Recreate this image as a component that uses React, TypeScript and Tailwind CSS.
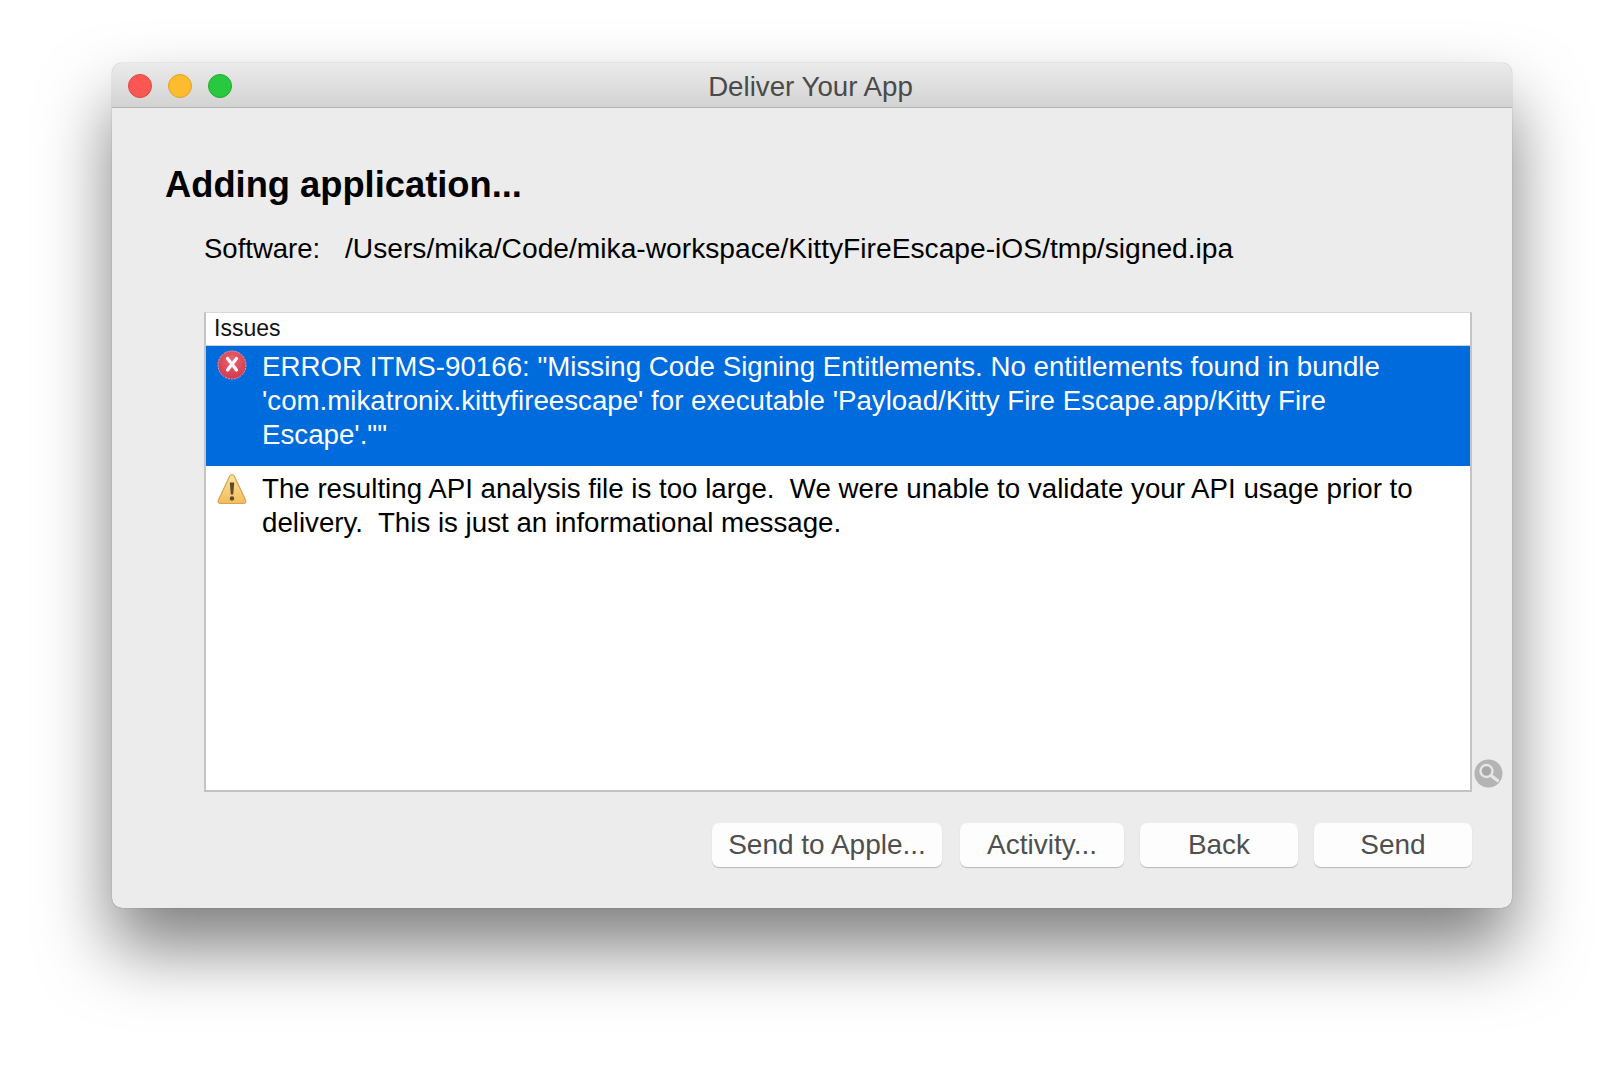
const font = { fontFamily: '"Liberation Sans", Arial, sans-serif' }

function ErrorIcon() {
  return (
    <svg width="30" height="30" viewBox="0 0 30 30" className="shrink-0">
      <defs>
        <radialGradient id="err" cx="50%" cy="35%" r="65%">
          <stop offset="0%" stopColor="#ee6470" />
          <stop offset="100%" stopColor="#cf3a4c" />
        </radialGradient>
      </defs>
      <circle cx="15" cy="15" r="14" fill="url(#err)" stroke="#e8a0ad" strokeWidth="1" strokeDasharray="2 1" />
      <path d="M10.5 8.5 L19.5 20 M19.5 8.5 L10.5 20" stroke="#fff" strokeWidth="3.2" strokeLinecap="round" />
    </svg>
  )
}

function WarningIcon() {
  return (
    <svg width="30" height="32" viewBox="0 0 30 32" className="shrink-0">
      <defs>
        <linearGradient id="warn" x1="0" y1="0" x2="0" y2="1">
          <stop offset="0%" stopColor="#fbe3a4" />
          <stop offset="100%" stopColor="#f3bc5c" />
        </linearGradient>
      </defs>
      <path d="M15 1.5 C16 1.5 16.8 2.2 17.4 3.3 L28.5 27 C29.5 29 28.5 30.5 26.5 30.5 L3.5 30.5 C1.5 30.5 .5 29 1.5 27 L12.6 3.3 C13.2 2.2 14 1.5 15 1.5 Z" fill="url(#warn)" stroke="#d9a24e" strokeWidth="1.2" />
      <path d="M12.8 9.5 H17.2 L16.2 21.5 H13.8 Z" fill="#5c4a28" />
      <circle cx="15" cy="25.4" r="2.2" fill="#5c4a28" />
    </svg>
  )
}

function SearchIcon() {
  return (
    <svg width="29" height="29" viewBox="0 0 29 29" className="shrink-0">
      <circle cx="14.5" cy="14.5" r="14" fill="#b4b4b4" />
      <circle cx="12.5" cy="12" r="6" fill="#a8a8a8" stroke="#e6e6e6" strokeWidth="2.4" />
      <path d="M17 16.5 L23.5 21.5" stroke="#e6e6e6" strokeWidth="3.4" strokeLinecap="round" />
    </svg>
  )
}

function MacButton({ label, width }: { label: string; width: string }) {
  return (
    <button className={`${width} h-[44px] rounded-[7px] bg-[#fdfdfd] text-[28px] leading-none text-[#4f4f4f] shadow-[0_1px_1px_rgba(0,0,0,0.22)]`}>
      {label}
    </button>
  )
}

export default function App() {
  return (
    <div className="h-[1068px] w-[1624px] overflow-hidden bg-white pl-[112px] pt-[63px]" style={font}>
      <div className="flex h-[845px] w-[1400px] flex-col overflow-hidden rounded-[10px] bg-[#ececec] shadow-[0_40px_70px_rgba(0,0,0,0.5),0_0_1px_rgba(0,0,0,0.5)]">
        <div className="relative flex h-[45px] shrink-0 items-center justify-center border-b border-[#b4b4b4] bg-gradient-to-b from-[#ebebeb] to-[#d3d3d3] pr-[3px] pt-[3px]">
          <div className="absolute left-[16px] top-[11px] flex gap-[16px]">
            <div className="h-[24px] w-[24px] rounded-full border border-[#e2463f] bg-[#fc5753]" />
            <div className="h-[24px] w-[24px] rounded-full border border-[#e1a325] bg-[#fdbc2e]" />
            <div className="h-[24px] w-[24px] rounded-full border border-[#1eac2c] bg-[#28c93f]" />
          </div>
          <span className="text-[27.7px] text-[#4a4a4a]">Deliver Your App</span>
        </div>

        <div className="flex flex-1 flex-col">
          <h1 className="ml-[53px] mt-[55px] text-[36.3px] font-bold leading-[44px] text-black">Adding application...</h1>

          <div className="ml-[92px] mt-[21px] flex items-baseline leading-[40px] text-black">
            <span className="w-[141px] text-[27.5px]">Software:</span>
            <span className="text-[28.2px]">/Users/mika/Code/mika-workspace/KittyFireEscape-iOS/tmp/signed.ipa</span>
          </div>

          <div className="ml-[92px] mt-[43px] flex items-end gap-[2px]">
            <div className="flex h-[480px] w-[1268px] flex-col border-2 border-t border-[#c4c4c4] border-t-[#d8d8d8] bg-white">
              <div className="h-[33px] border-b border-[#d0d0d0] pl-[8px] text-[23px] leading-[31px] text-[#111]">Issues</div>
              <div className="flex h-[120px] gap-[15px] bg-[#006bdc] pl-[11px] pt-[4px] text-[27.7px] leading-[34px] text-white">
                <div><ErrorIcon /></div>
                <div className="w-[1170px]">
                  ERROR ITMS-90166: "Missing Code Signing Entitlements. No entitlements found in bundle 'com.mikatronix.kittyfireescape' for executable 'Payload/Kitty Fire Escape.app/Kitty Fire Escape'.""
                </div>
              </div>
              <div className="flex gap-[15px] pl-[11px] pt-[6px] text-[27.7px] leading-[34px] text-black">
                <div className="pt-[1px]"><WarningIcon /></div>
                <div className="w-[1170px] whitespace-pre-wrap">
                  {"The resulting API analysis file is too large.  We were unable to validate your API usage prior to delivery.  This is just an informational message."}
                </div>
              </div>
            </div>
            <div className="pb-[4px]"><SearchIcon /></div>
          </div>

          <div className="ml-[600px] mt-[31px] flex w-[760px] justify-between">
            <MacButton label="Send to Apple..." width="w-[230px]" />
            <div className="flex gap-[16px]">
              <MacButton label="Activity..." width="w-[164px]" />
              <MacButton label="Back" width="w-[158px]" />
              <MacButton label="Send" width="w-[158px]" />
            </div>
          </div>
        </div>
      </div>
    </div>
  )
}
